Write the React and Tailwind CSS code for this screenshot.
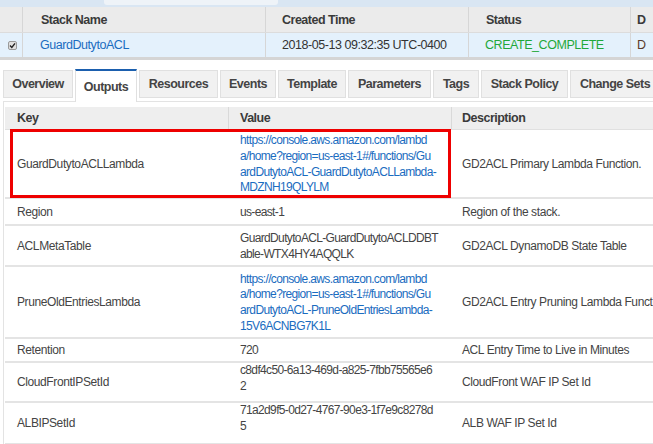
import React from "react";

const rows = [
  { key: "GuardDutytoACLLambda", value: ["https://console.aws.amazon.com/lambd", "a/home?region=us-east-1#/functions/Gu", "ardDutytoACL-GuardDutytoACLLambda-", "MDZNH19QLYLM"], link: true, desc: "GD2ACL Primary Lambda Function.", h: "h-[69px]", red: true },
  { key: "Region", value: ["us-east-1"], desc: "Region of the stack.", h: "h-[27px]" },
  { key: "ACLMetaTable", value: ["GuardDutytoACL-GuardDutytoACLDDBT", "able-WTX4HY4AQQLK"], desc: "GD2ACL DynamoDB State Table", h: "h-[41px]" },
  { key: "PruneOldEntriesLambda", value: ["https://console.aws.amazon.com/lambd", "a/home?region=us-east-1#/functions/Gu", "ardDutytoACL-PruneOldEntriesLambda-", "15V6ACNBG7K1L"], link: true, desc: "GD2ACL Entry Pruning Lambda Function", h: "h-[72px]" },
  { key: "Retention", value: ["720"], desc: "ACL Entry Time to Live in Minutes", h: "h-[24px]" },
  { key: "CloudFrontIPSetId", value: ["c8df4c50-6a13-469d-a825-7fbb75565e6", "2"], desc: "CloudFront WAF IP Set Id", h: "h-[40px]", top: true },
  { key: "ALBIPSetId", value: ["71a2d9f5-0d27-4767-90e3-1f7e9c8278d", "5"], desc: "ALB WAF IP Set Id", h: "h-[42px]", top: true },
];

const tabs = [
  { name: "Overview", w: "w-[70px]" },
  { name: "Outputs", w: "w-[62px]", active: true },
  { name: "Resources", w: "w-[79px]" },
  { name: "Events", w: "w-[56px]" },
  { name: "Template", w: "w-[68px]" },
  { name: "Parameters", w: "w-[83px]" },
  { name: "Tags", w: "w-[46px]" },
  { name: "Stack Policy", w: "w-[87px]" },
  { name: "Change Sets", w: "w-[90px]" },
];

export default function App() {
  return (
    <div className="w-[653px] h-[444px] overflow-hidden bg-white text-[#444] font-['Liberation_Sans',Arial,sans-serif]">
      {/* top strip */}
      <div className="h-[7px] bg-[#d9e6f3] flex">
        <div className="ml-[104px] w-[174px] h-[5px] bg-[#eef3f8] rounded-b-[3px]" />
      </div>
      {/* stack header */}
      <div className="flex h-[26px] bg-[#ebebeb] border-b border-[#dcdcdc] text-[12.5px] tracking-[-0.5px] font-bold text-[#3a3a3a]">
        <div className="w-[23px] border-r border-[#d6d6d6]" />
        <div className="w-[243px] border-r border-[#d6d6d6] flex items-center pl-[18px] pt-[1px]">Stack Name</div>
        <div className="w-[203px] border-r border-[#d6d6d6] flex items-center pl-[16px] pt-[1px]">Created Time</div>
        <div className="w-[162px] border-r border-[#d6d6d6] flex items-center pl-[17px] pt-[1px]">Status</div>
        <div className="flex-1 flex items-center pl-[6px] pt-[1px]">D</div>
      </div>
      {/* stack row */}
      <div className="flex h-[27px] bg-[#e4f1fc] text-[12.5px] tracking-[-0.45px] border-b-[3px] border-[#d5d5d5]">
        <div className="w-[23px] border-r border-[#d6d6d6] flex items-center pl-[8px]">
          <div className="w-[9px] h-[9px] bg-[#e0e0e0] border border-[#9a9a9a] rounded-[2px] flex items-center justify-center">
            <svg width="7" height="7" viewBox="0 0 7 7"><path d="M1 3.6 L2.8 5.4 L6 1.4" stroke="#222" strokeWidth="1.4" fill="none" /></svg>
          </div>
        </div>
        <div className="w-[243px] border-r border-[#d6d6d6] flex items-center pl-[17px] text-[#1a6cc0]">GuardDutytoACL</div>
        <div className="w-[203px] border-r border-[#d6d6d6] flex items-center pl-[16px] text-[#333]">2018-05-13 09:32:35 UTC-0400</div>
        <div className="w-[162px] border-r border-[#d6d6d6] flex items-center pl-[16px] text-[#1fa83a]">CREATE_COMPLETE</div>
        <div className="flex-1 flex items-center pl-[6px] text-[#5a3a2a]">D</div>
      </div>
      {/* tabs */}
      <div className="mt-[9px] flex items-start pl-[3px] gap-[2px] h-[32px] text-[12.5px] tracking-[-0.5px] font-bold text-[#444]">
        {tabs.map((t) => (
          <div
            key={t.name}
            className={
              t.active
                ? `${t.w} shrink-0 h-[33px] bg-white border-t-[2px] border-[#1b5fae] border-x border-x-[#e0e0e0] flex items-center justify-center pt-[1px] relative z-10`
                : `${t.w} shrink-0 h-[28px] mt-[1px] bg-[#f1f1f1] border border-[#e0e0e0] flex items-center justify-center`
            }
          >
            <span className="whitespace-nowrap">{t.name}</span>
          </div>
        ))}
      </div>
      {/* panel */}
      <div className="ml-[3px] border-l border-t border-[#e3e3e3] pt-[5px] pl-[1px]">
        <div className="flex h-[23px] bg-[#eeeeee] text-[12.5px] tracking-[-0.5px] font-bold text-[#3a3a3a] border-b border-[#e0e0e0]">
          <div className="w-[224px] border-r border-[#d9d9d9] flex items-center pl-[12px]">Key</div>
          <div className="w-[223px] border-r border-[#d9d9d9] flex items-center pl-[11px]">Value</div>
          <div className="flex-1 flex items-center pl-[10px]">Description</div>
        </div>
        {rows.map((r) => (
          <div key={r.key} className={`relative flex ${r.h} border-b-2 border-[#e4e4e4] text-[12px] tracking-[-0.4px] text-[#444]`}>
            <div className="w-[224px] flex items-center pl-[12px] whitespace-nowrap">{r.key}</div>
            <div className={`w-[223px] flex flex-col ${r.top ? "justify-start" : "justify-center pt-[2px]"} pl-[11px] leading-[15.7px] tracking-[-0.65px] whitespace-nowrap ${r.link ? "text-[#1a6cc0]" : ""}`}>
              {r.value.map((l, i) => (
                <span key={i}>{l}</span>
              ))}
            </div>
            <div className="flex-1 flex items-center pl-[10px] whitespace-nowrap overflow-hidden">{r.desc}</div>
            {r.red && (
              <div className="absolute left-[5px] top-[-1px] w-[441px] h-[69px] border-[3px] border-[#ee0000] pointer-events-none" />
            )}
          </div>
        ))}
      </div>
    </div>
  );
}
